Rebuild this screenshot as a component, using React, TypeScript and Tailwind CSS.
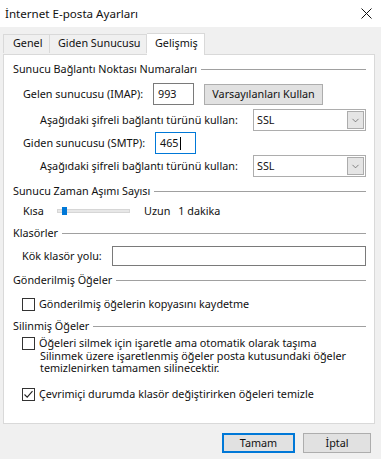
import { ChevronDown } from "lucide-react";

const GroupHeader = ({ title, className = "" }: { title: string; className?: string }) => (
    <div className={`flex items-center h-[16px] pl-[9px] pr-[8px] ${className}`}>
        <span>{title}</span>
        <div className="flex-1 h-px bg-[#a0a0a0] ml-[4px]" />
    </div>
);

const Checkbox = ({ checked }: { checked?: boolean }) => (
    <div className="w-[13px] h-[13px] border border-[#333333] bg-white flex items-center justify-center shrink-0">
        {checked && (
            <svg width="11" height="11" viewBox="0 0 11 11">
                <path d="M1.5 5.5 L4.2 8.2 L9.5 2.2" fill="none" stroke="#222" strokeWidth="1.1" />
            </svg>
        )}
    </div>
);

const Select = ({ value }: { value: string }) => (
    <div className="w-[113px] h-[22px] border border-[#adadad] bg-white flex items-center justify-between pl-[3px] pr-[1px] shrink-0">
        <span>{value}</span>
        <div className="w-[17px] h-[18px] bg-[#e5e5e5] border border-[#acacac] flex items-center justify-center">
            <ChevronDown className="size-[11px] text-[#555]" strokeWidth={1.5} />
        </div>
    </div>
);

const App = () => {
    return (
        <div className="w-[381px] h-[459px] bg-[#f0f0f0] text-[10.8px] text-[#111] font-['Noto_Sans',sans-serif] leading-none overflow-hidden whitespace-nowrap">
            {/* title bar */}
            <div className="h-[27px] bg-white flex items-center justify-between pl-[5px] pr-[9px]">
                <span className="text-[11.6px]">İnternet E-posta Ayarları</span>
                <svg width="11" height="11" viewBox="0 0 11 11">
                    <path d="M0.5 0.5 L10.5 10.5 M10.5 0.5 L0.5 10.5" stroke="#111" strokeWidth="1" />
                </svg>
            </div>

            {/* tabs */}
            <div className="flex items-end h-[27px] pl-[3px] pt-[7px] relative z-10">
                <div className="h-[19px] w-[47px] border border-b-0 border-[#d9d9d9] flex items-center pl-[9px] pb-[1px] mb-px">
                    Genel
                </div>
                <div className="h-[19px] w-[97px] border border-l-0 border-b-0 border-[#d9d9d9] flex items-center pl-[8px] pb-[1px] mb-px">
                    Giden Sunucusu
                </div>
                <div className="h-[22px] w-[58px] border border-l-0 border-b-0 border-[#d9d9d9] bg-white flex items-center pl-[8px] pb-[3px] -mb-px">
                    Gelişmiş
                </div>
            </div>

            {/* panel */}
            <div className="ml-[3px] w-[372px] h-[370px] border border-[#d9d9d9] bg-white flex flex-col">
                <GroupHeader title="Sunucu Bağlantı Noktası Numaraları" className="mt-[6px]" />

                <div className="flex items-center h-[22px] mt-[6px] pl-[19px]">
                    <span className="w-[130px]">Gelen sunucusu (IMAP):</span>
                    <div className="w-[41px] h-[22px] border border-[#7a7a7a] flex items-center pl-[4px]">993</div>
                    <div className="ml-[10px] w-[119px] h-[21px] bg-[#e1e1e1] border border-[#adadad] flex items-center justify-center">
                        Varsayılanları Kullan
                    </div>
                </div>

                <div className="flex items-center h-[22px] mt-[4px] pl-[36px]">
                    <span className="w-[213px]">Aşağıdaki şifreli bağlantı türünü kullan:</span>
                    <Select value="SSL" />
                </div>

                <div className="flex items-center h-[22px] mt-[1px] pl-[19px]">
                    <span className="w-[132px]">Giden sunucusu (SMTP):</span>
                    <div className="w-[41px] h-[22px] border border-[#0078d7] flex items-center pl-[4px]">
                        465<span className="w-px h-[13px] bg-black ml-px" />
                    </div>
                </div>

                <div className="flex items-center h-[22px] mt-[1px] pl-[36px]">
                    <span className="w-[213px]">Aşağıdaki şifreli bağlantı türünü kullan:</span>
                    <Select value="SSL" />
                </div>

                <GroupHeader title="Sunucu Zaman Aşımı Sayısı" className="mt-[6px]" />

                <div className="flex items-center h-[16px] mt-[4px] pl-[19px]">
                    <span className="w-[34px]">Kısa</span>
                    <div className="relative w-[73px] h-[4px] bg-[#e7e7e7] border border-[#d6d6d6]">
                        <div className="absolute left-[4px] -top-[3px] w-[5px] h-[8px] bg-[#0078d7]" />
                    </div>
                    <span className="ml-[14px]">Uzun</span>
                    <span className="ml-[8px]">1 dakika</span>
                </div>

                <GroupHeader title="Klasörler" className="mt-[6px]" />

                <div className="flex items-center h-[20px] mt-[5px] pl-[18px]">
                    <span className="w-[90px]">Kök klasör yolu:</span>
                    <div className="w-[254px] h-[20px] border border-[#7a7a7a]" />
                </div>

                <GroupHeader title="Gönderilmiş Öğeler" className="mt-[6px]" />

                <div className="flex items-center h-[16px] mt-[8px] pl-[18px]">
                    <Checkbox />
                    <span className="ml-[4px]">Gönderilmiş öğelerin kopyasını kaydetme</span>
                </div>

                <GroupHeader title="Silinmiş Öğeler" className="mt-[6px]" />

                <div className="flex items-center h-[13px] mt-[3px] pl-[18px]">
                    <Checkbox />
                    <span className="ml-[4px]">Öğeleri silmek için işaretle ama otomatik olarak taşıma</span>
                </div>

                <div className="pl-[36px] leading-[12px]">
                    <div>Silinmek üzere işaretlenmiş öğeler posta kutusundaki öğeler</div>
                    <div>temizlenirken tamamen silinecektir.</div>
                </div>

                <div className="flex items-center h-[14px] mt-[13px] pl-[18px]">
                    <Checkbox checked />
                    <span className="ml-[4px]">Çevrimiçi durumda klasör değiştirirken öğeleri temizle</span>
                </div>
            </div>

            {/* buttons */}
            <div className="flex justify-end mt-[9px] pr-[10px] gap-[8px]">
                <div className="w-[73px] h-[20px] bg-[#e1e1e1] border-2 border-[#0078d7] flex items-center justify-center">
                    Tamam
                </div>
                <div className="w-[68px] h-[20px] bg-[#e1e1e1] border border-[#adadad] flex items-center justify-center">
                    İptal
                </div>
            </div>
        </div>
    );
};

export default App;
